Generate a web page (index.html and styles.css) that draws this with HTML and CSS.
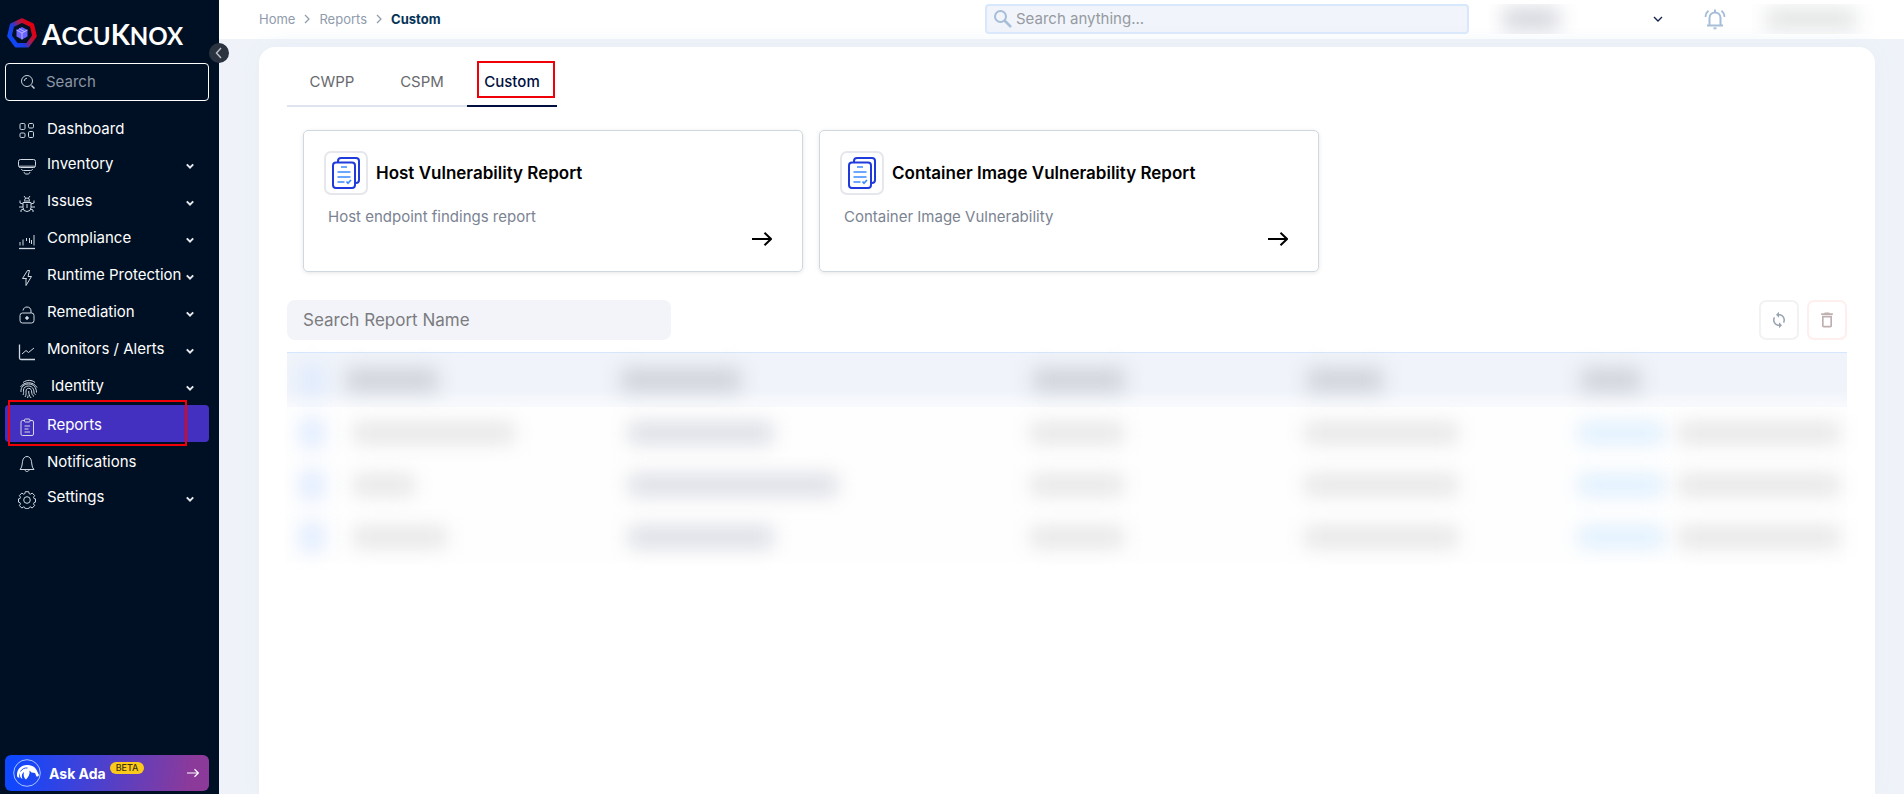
FILE: index.html
```html
<!DOCTYPE html>
<html lang="en">
<head>
<meta charset="utf-8">
<meta name="viewport" content="width=device-width, initial-scale=1">
<title>AccuKnox Reports</title>
<link rel="stylesheet" href="styles.css">
</head>
<body>
<svg class="defs" aria-hidden="true">
  <symbol id="chev" viewBox="0 0 10 10"><path d="M1.8 3.4 5 6.6 8.2 3.4" fill="none" stroke="currentColor" stroke-width="2"/></symbol>
  <symbol id="crumb" viewBox="0 0 8 12"><path d="M2 2 6 6 2 10" fill="none" stroke="currentColor" stroke-width="1.2"/></symbol>
  <symbol id="arrow" viewBox="0 0 20 14"><path d="M0 7H19M12.500 .8 19 7 12.500 13.200" fill="none" stroke="currentColor" stroke-width="2"/></symbol>
  <symbol id="doc" viewBox="0 0 28 32">
    <path d="M6 5V4a3 3 0 0 1 3-3H24a3 3 0 0 1 3 3V23a3 3 0 0 1-3 3H23" fill="none" stroke="#1f3bdc" stroke-width="2"/>
    <rect x="1" y="5.500" width="22" height="25.500" rx="3" fill="#fff" stroke="#1f3bdc" stroke-width="2"/>
    <path d="M9 10h6M5.500 15h13M5.500 20h13M5.500 25h7M14.500 24.500l1.500 1.800 3-3.300" fill="none" stroke="#3d8bff" stroke-width="1.700"/>
  </symbol>
</svg>
<div class="app">
  <aside class="sidebar">
    <a class="brand" href="#">
      <svg width="30" height="30" viewBox="0 0 30 30" aria-hidden="true">
        <defs><linearGradient id="hg" x1="1" y1="0.200" x2="0" y2="0.800"><stop offset="0.150" stop-color="#e00012"/><stop offset="0.400" stop-color="#a81a4c"/><stop offset="0.650" stop-color="#1f3be0"/><stop offset="1" stop-color="#0a4bff"/></linearGradient></defs>
        <path d="M15 2.500 25 7.300 27.500 18 20.500 27.300H9.500L2.500 18 5 7.300Z" fill="none" stroke="url(#hg)" stroke-width="4.500" stroke-linejoin="round"/>
        <path d="M15 9l5.500 3v6.500L15 21.500l-5.500-3V12Z" fill="#6a63ff"/>
        <path d="M9.500 12 15 15l5.500-3M15 15v6.500M12 10.600l5.500 3" fill="none" stroke="#c9c8ff" stroke-width=".8"/>
      </svg>
      <span class="wordmark">A<small>CCU</small>K<small>NOX</small></span>
    </a>
    <label class="side-search">
      <svg width="16" height="16" viewBox="0 0 16 16" fill="none" stroke="#c9d0da" aria-hidden="true"><circle cx="7" cy="7" r="5.500"/><path d="M11.500 11.500 14.500 14.500" stroke-width="1.500"/><path d="M4.200 7A3 3 0 0 1 7 4.200"/></svg>
      <input type="search" placeholder="Search" aria-label="Search menu">
    </label>
    <nav class="menu">
      <a class="item leaf" href="#"><svg class="ico" viewBox="0 0 18 18"><rect x="2" y="1.500" width="5" height="6" rx="1.200"/><rect x="10.500" y="1.500" width="5" height="4.500" rx="1.200"/><rect x="2" y="11" width="5" height="4.500" rx="1.200"/><rect x="10.500" y="9.500" width="5" height="6" rx="1.200"/></svg><span>Dashboard</span></a>
      <a class="item" href="#"><svg class="ico" viewBox="0 0 18 18"><rect x=".5" y="1.500" width="17" height="8" rx="2"/><path d="M1 8.500h16" stroke-width="2" opacity=".6"/><path d="M3.500 11c.5 1.500 1 1.500 2 1.500h7c1 0 1.500 0 2-1.500M6 14c.5 1.500 1 2 2 2h2c1 0 1.500-.5 2-2"/></svg><span>Inventory</span><svg class="chev"><use href="#chev"/></svg></a>
      <a class="item" href="#"><svg class="ico" viewBox="0 0 18 18"><path d="M6.500 5.500a2.500 2.500 0 0 1 5 0M6 6h6M5 7.500h8v5a4 4 0 0 1-8 0ZM9 9v4M6 1l1.500 2M12 1l-1.500 2M5 9 2 8V5.500M5 12H1M5.500 14 3 15v2M13 9l3-1V5.500M13 12h4M12.500 14l2.500 1v2"/></svg><span>Issues</span><svg class="chev"><use href="#chev"/></svg></a>
      <a class="item" href="#"><svg class="ico" viewBox="0 0 18 18"><path d="M1 16.500h16" stroke-width="1.300"/><path d="M2 10v3.500M5 7.500v6M8.500 6v3M11.500 6v5M13.500 8v4M16 3v10.500"/></svg><span>Compliance</span><svg class="chev"><use href="#chev"/></svg></a>
      <a class="item" href="#"><svg class="ico" viewBox="0 0 18 18"><path d="M9.500 1.500 4.500 9.500h4l-.5 0v7l5.500-9H10l1.500-6Z"/></svg><span>Runtime Protection</span><svg class="chev"><use href="#chev"/></svg></a>
      <a class="item" href="#"><svg class="ico" viewBox="0 0 18 18"><rect x="2" y="7" width="14" height="10" rx="2.500"/><path d="M5 4.500C5.500 2 7 1 9 1c2.500 0 4 1.500 4 4v2"/><circle cx="9" cy="12" r="1.300" fill="currentColor"/></svg><span>Remediation</span><svg class="chev"><use href="#chev"/></svg></a>
      <a class="item" href="#"><svg class="ico" viewBox="0 0 18 18"><path d="M1.500 1.500V15a1.500 1.500 0 0 0 1.500 1.500H17" stroke-width="1.300"/><path d="M4 11l4-3.500 2.500 2L16 5"/></svg><span>Monitors / Alerts</span><svg class="chev"><use href="#chev"/></svg></a>
      <a class="item identity" href="#"><svg class="ico finger" viewBox="0 0 20 20"><path d="M4 3.500C8 .5 13 .8 16 3.500M1.500 8C5 2.500 14 2 18 8.500M2 13C1.500 8 5 5 9.500 5c5 0 8 3.500 8 8.500M4 16c1-2 .5-3 .5-5 0-2.500 2.500-4 5-4 3.500 0 5.500 3 5.500 6 0 1.500.5 2.500 1.500 2.500M6 18c1.500-2 1-4.500 1-6 0-1.800 1.300-2.700 2.700-2.700 2 0 3 1.700 3 3.700 0 2 .8 3.500 2.300 4.500M9.700 12c0 3 .5 5 2.500 7M8.500 19c.5-1 .5-1.500.5-2.500"/></svg><span>Identity</span><svg class="chev"><use href="#chev"/></svg></a>
      <a class="item leaf active" href="#" aria-current="page"><svg class="ico" viewBox="0 0 18 18"><rect x="3" y="2.500" width="12.500" height="15" rx="1.500"/><rect x="6.500" y="1" width="5.500" height="3" rx="1" fill="#4430c0"/><path d="M6.500 8h5.500M6.500 11h4M6.500 14h5.500"/></svg><span>Reports</span></a>
      <a class="item leaf" href="#"><svg class="ico" viewBox="0 0 18 18"><path d="M2 14.500c2-2 2-4.500 2.500-8C5 3 7 1.500 9 1.500S13 3 13.500 6.500c.5 3.500.5 6 2.500 8ZM7 15c.5 2 3.500 2 4 0"/></svg><span>Notifications</span></a>
      <a class="item" href="#"><svg class="ico" viewBox="0 0 18 18"><circle cx="9" cy="9" r="3.300"/><path d="M7.300.7h3.400l.5 2 1.200.5 1.800-1.100 2.400 2.400-1.100 1.800.5 1.200 1.500.4v3.200l-1.500.5-.5 1.200 1.100 1.800-2.400 2.400-1.800-1.100-1.200.5-.5 1.300H7.300l-.5-1.300-1.200-.5-1.800 1.100-2.400-2.400 1.100-1.800-.5-1.200-1.500-.5V7.900L2 7.500l.5-1.200-1.100-1.800 2.400-2.400 1.800 1.100 1.200-.5Z" stroke-linejoin="round"/></svg><span>Settings</span><svg class="chev"><use href="#chev"/></svg></a>
    </nav>
    <button class="ask" type="button">
      <svg width="28" height="28" viewBox="0 0 28 28" aria-hidden="true"><circle cx="14" cy="14" r="13.300" fill="none" stroke="#a9c4ff"/><path d="M4 17C3.500 10 8.500 5.500 15 6c5 .3 8 3 9.500 7l1.500 3-1 1.500h-1.500L22 14l-3.500-.5-2-2c.5 4-1 6-3.500 9-2-1.500-3-4-2-7.500-2.500 1.500-2.500 4.500-1.500 7-2.500-1-3-3.500-2.500-6C6 15.500 6 17.500 6.500 19 5 18.500 4.300 18 4 17Z" fill="#fff"/><path d="M7.500 12.500c1.500-2.500 4-4 7-3.500" fill="none" stroke="#234cf4"/></svg>
      <span class="ask-name">Ask Ada</span><span class="beta">BETA</span>
      <svg class="ask-arrow" width="12" height="10"><use href="#arrow"/></svg>
    </button>
    <button class="collapse" type="button" aria-label="Collapse sidebar"><svg width="20" height="20" viewBox="0 0 20 20"><path d="M12 5 7.500 10 12 15" fill="none" stroke="#b9bec6" stroke-width="1.500"/></svg></button>
  </aside>

  <div class="page">
    <header class="topbar">
      <nav class="crumbs" aria-label="Breadcrumb">
        <a href="#">Home</a><svg><use href="#crumb"/></svg><a href="#">Reports</a><svg><use href="#crumb"/></svg><strong>Custom</strong>
      </nav>
      <label class="global-search">
        <svg width="20" height="20" viewBox="0 0 20 20" fill="none" stroke="#a5bdd8" aria-hidden="true"><circle cx="7.500" cy="7.500" r="5.500" stroke-width="2"/><path d="M11.500 11.500 18 18" stroke-width="2.500"/></svg>
        <input type="search" placeholder="Search anything..." aria-label="Search anything">
      </label>
      <button class="tenant" type="button" aria-label="Workspace"><span class="mask"><span class="smudge"></span></span><svg width="10" height="10" viewBox="0 0 10 10"><path d="M1 3 5 7 9 3" fill="none" stroke="#14244a" stroke-width="1.400"/></svg></button>
      <button class="bell" type="button" aria-label="Notifications"><svg width="22" height="22" viewBox="0 0 22 22" fill="none" stroke="#a5bdd8" stroke-width="2"><path d="M3 17.500h16M5.500 17V10c0-3.500 2.500-5.500 5.500-5.500s5.500 2 5.500 5.500v7M11 1.500V4"/><path d="M1.500 9c0-3 1.300-5 3-6.300M20.500 9c0-3-1.300-5-3-6.300" stroke-width="1.700"/><path d="M9.500 20.300h3"/></svg></button>
      <button class="user" type="button" aria-label="Account"><span class="mask"><span class="smudge"></span></span></button>
    </header>

    <main class="panel">
      <div class="tabs" role="tablist">
        <button role="tab" type="button" aria-selected="false">CWPP</button>
        <button role="tab" type="button" aria-selected="false">CSPM</button>
        <button role="tab" type="button" aria-selected="true">Custom</button>
      </div>
      <div class="cards">
        <article class="card">
          <div class="card-head"><span class="tile"><svg><use href="#doc"/></svg></span><h2>Host Vulnerability Report</h2></div>
          <p>Host endpoint findings report</p>
          <a class="go" href="#" aria-label="Open Host Vulnerability Report"><svg><use href="#arrow"/></svg></a>
        </article>
        <article class="card">
          <div class="card-head"><span class="tile"><svg><use href="#doc"/></svg></span><h2>Container Image Vulnerability Report</h2></div>
          <p>Container Image Vulnerability</p>
          <a class="go" href="#" aria-label="Open Container Image Vulnerability Report"><svg><use href="#arrow"/></svg></a>
        </article>
      </div>
      <div class="tools">
        <input class="report-search" type="search" placeholder="Search Report Name" aria-label="Search Report Name">
        <button class="tool" type="button" aria-label="Refresh"><svg width="18" height="18" viewBox="0 0 24 24" fill="#9aa3b0"><path d="M12 4V1L8 5l4 4V6c3.310 0 6 2.690 6 6 0 1.010-.25 1.970-.7 2.800l1.460 1.460C19.540 15.030 20 13.570 20 12c0-4.420-3.580-8-8-8zm0 14c-3.310 0-6-2.690-6-6 0-1.010.25-1.970.7-2.800L5.240 7.740C4.460 8.970 4 10.430 4 12c0 4.420 3.580 8 8 8v3l4-4-4-4v3z"/></svg></button>
        <button class="tool danger" type="button" aria-label="Delete"><svg width="20" height="20" viewBox="0 0 24 24" fill="#bfb0b0"><path d="M6 19c0 1.100.9 2 2 2h8c1.100 0 2-.9 2-2V7H6v12zM8 9h8v10H8V9zM15.500 4l-1-1h-5l-1 1H5v2h14V4z"/></svg></button>
      </div>
      <table class="reports">
        <colgroup><col class="c-check"><col class="c-name"><col class="c-config"><col class="c-type"><col class="c-date"><col></colgroup>
        <thead><tr><th><i class="sm tick"></i></th><th><i class="sm w92"></i></th><th><i class="sm w120"></i></th><th><i class="sm w92"></i></th><th><i class="sm w76"></i></th><th><i class="sm w60"></i></th></tr></thead>
        <tbody>
          <tr><td><i class="sm tick"></i></td><td><i class="sm w160"></i></td><td><i class="sm cool w144"></i></td><td><i class="sm w92"></i></td><td><i class="sm w152"></i></td><td><div class="pair"><i class="sm sky"></i><i class="sm w168"></i></div></td></tr>
          <tr><td><i class="sm tick"></i></td><td><i class="sm w60"></i></td><td><i class="sm cool w208"></i></td><td><i class="sm w92"></i></td><td><i class="sm w152"></i></td><td><div class="pair"><i class="sm sky"></i><i class="sm w168"></i></div></td></tr>
          <tr><td><i class="sm tick"></i></td><td><i class="sm w92"></i></td><td><i class="sm cool w144"></i></td><td><i class="sm w92"></i></td><td><i class="sm w152"></i></td><td><div class="pair"><i class="sm sky"></i><i class="sm w168"></i></div></td></tr>
        </tbody>
      </table>
    </main>
  </div>
</div>
</body>
</html>
```
FILE: styles.css
```css
* { box-sizing: border-box; }
body { margin: 0; font-family: Inter, "Open Sans", sans-serif; background: #eff3f9; overflow: hidden; }
button, input { font: inherit; }
button { padding: 0; border: 0; background: none; cursor: pointer; }
input { border: 0; background: none; outline: 0; min-width: 0; }
a { color: inherit; text-decoration: none; }
svg { flex: none; display: block; }
.defs { position: absolute; width: 0; height: 0; }
.app { display: flex; height: 100vh; }

.sidebar { position: relative; flex: none; width: 219px; padding: 18px 10px 3px 5px; display: flex; flex-direction: column; background: #001024; color: #fff; }
.brand { display: flex; align-items: center; gap: 5px; height: 30px; padding-left: 2px; }
.wordmark { padding-top: 4px; font-family: Lato, sans-serif; font-size: 28px; font-weight: 700; line-height: 30px; }
.wordmark small { font-size: 24px; }
.side-search { display: flex; align-items: center; gap: 10px; height: 38px; margin-top: 15px; padding: 0 14px; border: 1px solid #fff; border-radius: 4px; }
.side-search input { flex: 1; padding: 0 0 2px; color: #fff; font-size: 15px; }
.side-search input::placeholder { color: #8c96a5; opacity: 1; }
.menu { margin-top: 8px; }
.item { position: relative; display: flex; align-items: center; gap: 11px; height: 37px; padding: 0 14px 2px 13px; font-size: 15px; white-space: nowrap; border-radius: 4px; }
.item > span { flex: 1; min-width: 0; }
.leaf { padding-top: 3px; }
.ico { width: 18px; height: 18px; margin-top: 6px; fill: none; stroke: #d3d9e2; color: #d3d9e2; }
.finger { width: 20px; height: 20px; }
.identity { padding-left: 14px; gap: 12px; }
.chev { width: 10px; height: 10px; margin: 4px 0 0 -11px; color: #e6e9ee; }
.active { background: #4430c0; }
.active::after { content: ""; position: absolute; left: 3px; top: -5px; right: 22px; bottom: -4px; border: 2px solid #f00008; }
.ask { display: flex; align-items: center; height: 36px; margin-top: auto; padding: 0 10px 0 8px; border-radius: 6px; color: #fff; background: linear-gradient(100deg, #0f47ff 5%, #8b3a9a 90%); }
.ask-name { margin-left: 8px; font-size: 14px; font-weight: 700; }
.beta { margin: 0 auto 10px 4px; padding: 0 6px; border-radius: 6px; background: #fbc91b; color: #3c3210; font-size: 9px; line-height: 12px; font-weight: 500; }
.collapse { position: absolute; z-index: 2; top: 43px; right: -10px; width: 20px; height: 20px; border-radius: 50%; background: #2b3340; }

.page { flex: 1; min-width: 0; display: flex; flex-direction: column; }
.topbar { flex: none; display: flex; align-items: center; height: 39px; padding: 0 24px 8px 40px; background: #fff; }
.crumbs { flex: 1; display: flex; align-items: center; gap: 8px; margin-top: 6px; color: #8f9bab; font-size: 13px; }
.crumbs strong { color: #043357; }
.crumbs svg { width: 8px; height: 12px; }
.global-search { display: flex; align-items: center; gap: 3px; width: 484px; height: 30px; margin-top: 6px; padding: 0 8px 0 6px; border: 2px solid #d8e8fc; border-radius: 4px; background: #f1f4fa; }
.global-search input { flex: 1; padding: 0; font-size: 15px; }
.global-search input::placeholder { color: #959aa2; opacity: 1; }
.tenant { display: flex; align-items: center; justify-content: space-between; width: 174px; height: 30px; margin: 7px 0 0 20px; }
.bell { margin: 6px 0 0 41px; }
.user { width: 128px; height: 30px; margin: 6px 0 0 26px; }
.mask { display: flex; align-items: center; width: 100px; height: 30px; overflow: hidden; }
.user .mask { width: 128px; }
.smudge { width: 56px; height: 20px; margin-left: 14px; background: #d0d2da; filter: blur(10px); }
.user .smudge { width: 90px; background: #e0e2e2; }

.panel { flex: 1; min-height: 0; margin: 8px 29px 0 40px; padding: 12px 28px 0; border-radius: 16px 16px 0 0; background: #fff; box-shadow: 0 0 24px #e8edf6; }
.tabs { display: grid; grid-template-columns: repeat(3, 90px); }
.tabs button { position: relative; height: 48px; padding-bottom: 2px; border-bottom: 2px solid #e0e4ee; color: #67696e; font-size: 15px; }
.tabs [aria-selected="true"] { border-color: #000f40; color: #000f40; font-weight: 500; }
.tabs [aria-selected="true"]::after { content: ""; position: absolute; left: 10px; right: 2px; top: 2px; bottom: 7px; border: 2px solid #f00008; }
.cards { display: grid; grid-template-columns: repeat(3, 1fr); gap: 16px; margin-top: 23px; padding: 0 12px 0 16px; }
.card { height: 142px; padding: 20px; border: 1px solid #cfd8de; border-radius: 5px; box-shadow: 0 1px 4px #0000001a; }
.card-head { display: flex; align-items: center; gap: 8px; }
.tile { display: grid; place-items: center; width: 44px; height: 44px; border: 2px solid #e6e7ec; border-radius: 7px; }
.tile svg { width: 28px; height: 32px; }
.card h2 { margin: 0; font-size: 17px; font-weight: 600; line-height: 24px; color: #000; }
.card p { margin: 12px 4px 0; font-size: 15px; line-height: 20px; color: #7b8392; }
.go { display: block; width: 20px; margin: 5px 10px 0 auto; color: #000; }
.go svg { width: 20px; height: 14px; }
.tools { display: flex; gap: 8px; margin-top: 28px; }
.report-search { width: 384px; height: 40px; margin-right: auto; padding: 0 16px; border-radius: 8px; background: #f3f4f9; font-size: 17px; }
.report-search::placeholder { color: #7b7c80; opacity: 1; }
.tool { display: grid; place-items: center; width: 40px; height: 40px; border: 2px solid #f2f2f3; border-radius: 7px; }
.danger { border-color: #ffeeee; }

.reports { width: 100%; margin-top: 12px; table-layout: fixed; border-spacing: 0; border-top: 1px solid #d5e7fc; }
.c-check { width: 49px; }
.c-name { width: 275px; }
.c-config { width: 412px; }
.c-type, .c-date { width: 274px; }
.reports th { height: 54px; padding: 0 10px; background: linear-gradient(#f0f4fa 70%, #f9fafd); }
.reports td { height: 52px; padding: 0 8px; background: #fefefe; }
.reports td:nth-child(-n+3) { padding-left: 18px; }
.sm { display: block; height: 18px; background: #e2e2e2; filter: blur(10px); }
th .sm { height: 22px; background: #cdd0d6; }
.cool { height: 20px; background: #d9dbe3; }
.reports .tick { width: 22px; height: 28px; background: #dce9ff; }
.reports :is(th, td):first-child { padding-left: 14px; padding-right: 0; }
.pair { display: flex; gap: 16px; }
.sky { flex: none; width: 84px; background: #d9edfe; }
.w60 { width: 60px; }
.w76 { width: 76px; }
.w92 { width: 92px; }
.w120 { width: 120px; }
.w144 { width: 144px; }
.w152 { width: 152px; }
.w160 { width: 160px; }
.w168 { width: 168px; }
.w208 { width: 208px; }
```
